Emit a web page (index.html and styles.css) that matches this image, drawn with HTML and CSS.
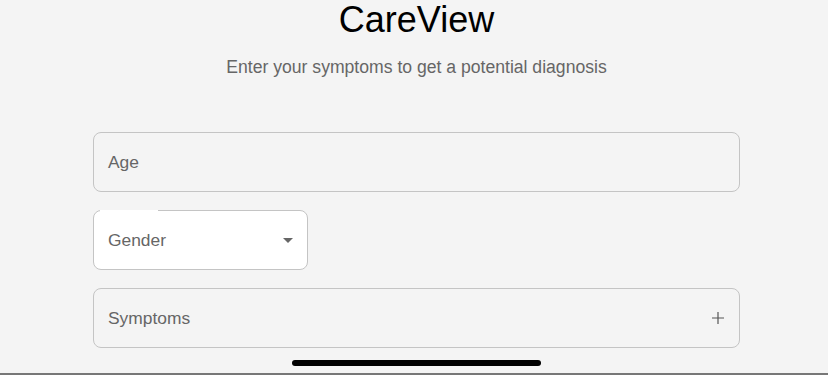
FILE: index.html
```html
<!DOCTYPE html>
<html lang="en">
<head>
    <meta charset="UTF-8">
    <meta name="viewport" content="width=device-width, initial-scale=1.0">
    <title>CareView</title>
    <link rel="stylesheet" href="styles.css">
</head>
<body>

<div class="container">
    <h1 class="title">CareView</h1>
    <p class="subtitle">Enter your symptoms to get a potential diagnosis</p>

    <div class="form">
        <div class="field">
            <span class="label">Age</span>
        </div>

        <div class="field select">
            <span class="notch"></span>
            <span class="label">Gender</span>
            <svg class="arrow" width="10" height="5" viewBox="0 0 10 5"><path d="M0 0 L10 0 L5 5 Z" fill="#666"/></svg>
        </div>

        <div class="field">
            <span class="label">Symptoms</span>
            <svg class="plus" width="12" height="12" viewBox="0 0 12 12"><path d="M6 0 V12 M0 6 H12" stroke="#555" stroke-width="1.2"/></svg>
        </div>
    </div>
</div>

<div class="home-bar"></div>
<div class="bottom-line"></div>

</body>
</html>
```

FILE: styles.css
```css
body {
    font-family: 'Liberation Sans', Arial, sans-serif;
    background-color: #f4f4f4;
    margin: 0;
    height: 375px;
    overflow: hidden;
}
.container {
    padding: 0 88px 0 93px;
}
.title {
    margin: 0;
    font-size: 36px;
    line-height: 40px;
    font-weight: normal;
    color: #000;
    text-align: center;
}
.subtitle {
    margin: 17px 0 0;
    font-size: 17.6px;
    line-height: 20px;
    color: #666;
    text-align: center;
}
.form {
    margin-top: 55px;
    display: flex;
    flex-direction: column;
    gap: 18px;
}
.field {
    position: relative;
    height: 60px;
    box-sizing: border-box;
    border: 1px solid #c4c4c4;
    border-radius: 8px;
    display: flex;
    align-items: center;
    justify-content: space-between;
    padding: 0 15px 0 14px;
}
.field.select {
    width: 215px;
    background: #fff;
    padding-right: 14px;
}
.notch {
    position: absolute;
    top: -1px;
    left: 6px;
    width: 58px;
    height: 2px;
    background: #fff;
}
.label {
    font-size: 17.4px;
    color: #666;
}
.arrow {
    margin-top: 1px;
}
.home-bar {
    position: absolute;
    left: 292px;
    top: 360px;
    width: 249px;
    height: 6px;
    border-radius: 3px;
    background: #000;
}
.bottom-line {
    position: absolute;
    left: 0;
    right: 0;
    top: 373px;
    height: 2px;
    background: #777;
}
```
